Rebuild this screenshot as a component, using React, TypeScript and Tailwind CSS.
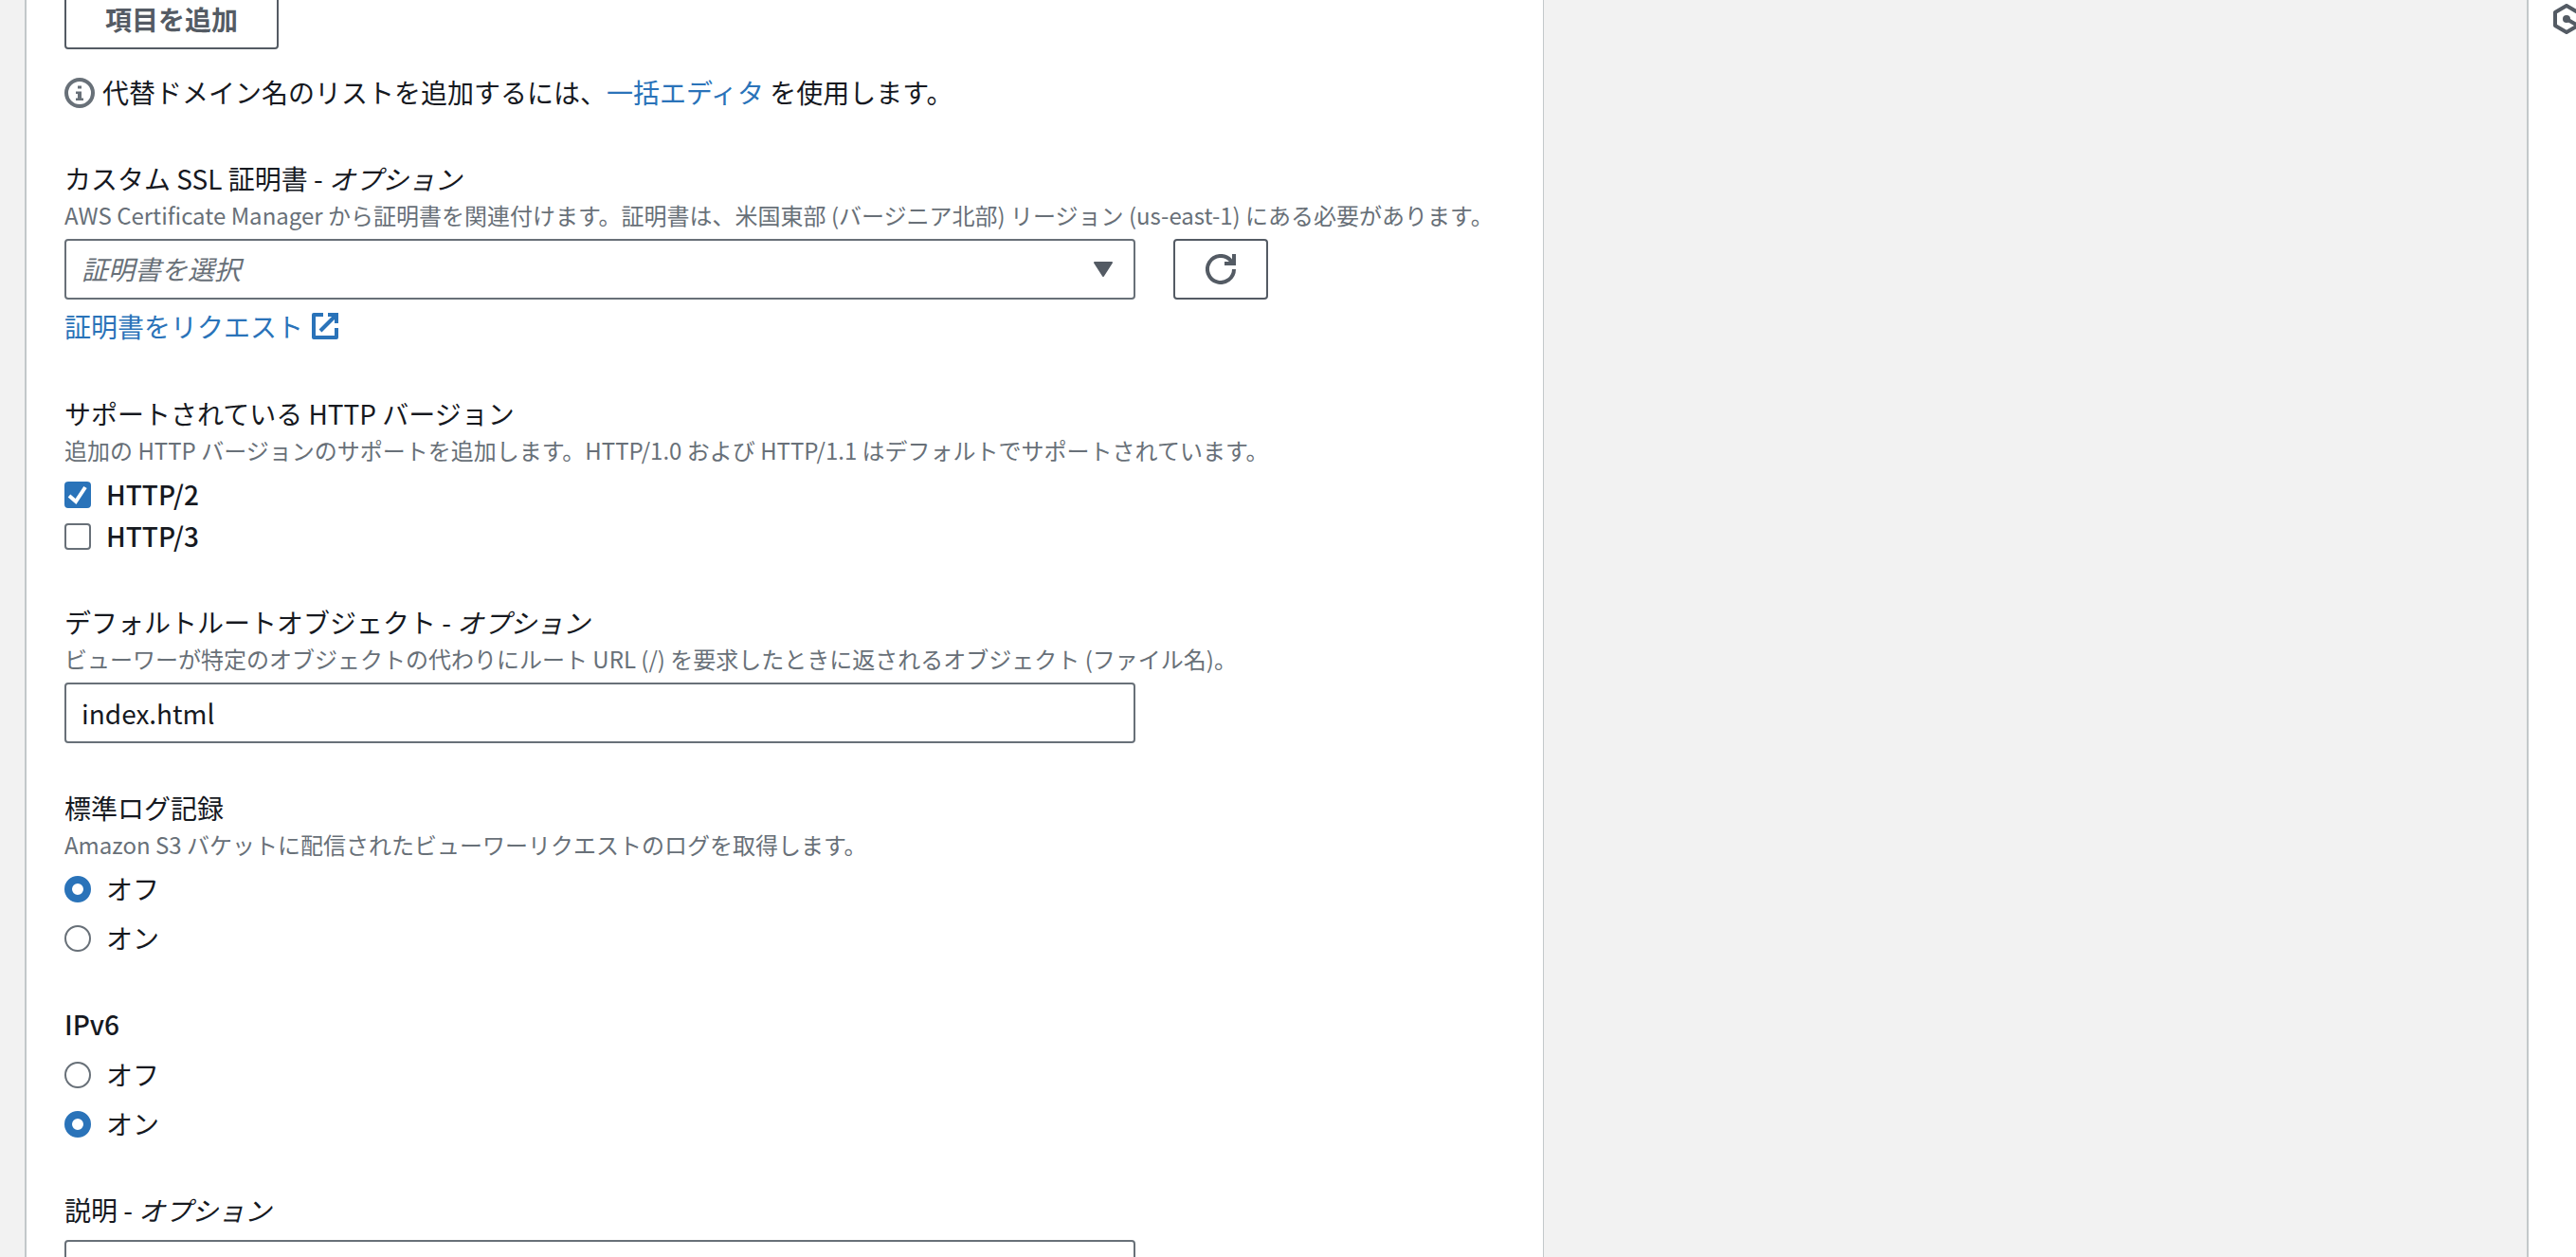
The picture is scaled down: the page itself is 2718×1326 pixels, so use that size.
import React, { useState } from 'react';

// --- ICONS ---
const InfoIcon = () => (
    <svg className="w-8 h-8 shrink-0" viewBox="0 0 16 16" aria-hidden="true">
        <circle cx="8" cy="8" r="7" fill="none" stroke="#687078" strokeWidth="2" />
        <path d="M7 4.300h2v1.500H7zM6 7.200h3v3.500h1V12H6v-1.300h1V8.500H6z" fill="#687078" />
    </svg>
);

const ExternalIcon = () => (
    <svg className="w-7 h-7 shrink-0" viewBox="0 0 14 14" fill="none" stroke="currentColor" strokeWidth="2" aria-hidden="true">
        <path d="M6 1H1v12h12V8" strokeLinejoin="round" />
        <path d="M8.500 1H13v4.500" />
        <path d="M13 1L4.500 9.500" />
    </svg>
);

const RefreshIcon = () => (
    <svg className="w-8 h-8" viewBox="0 0 16 16" fill="none" stroke="currentColor" strokeWidth="2" aria-hidden="true">
        <path d="M15 8a7 7 0 1 1-1.800-4.700L15 5" />
        <path d="M10 5h5V0" />
    </svg>
);

const HexagonIcon = () => (
    <svg className="w-8 h-8" viewBox="0 0 16 16" aria-hidden="true">
        <path d="M14 5V4.500L8 1L2 4.500v7L8 15l6-3.500L8 8" fill="none" stroke="#545b64" strokeWidth="2" strokeLinejoin="round" />
        <circle cx="8" cy="8" r="2" fill="#545b64" />
    </svg>
);

// --- FORM PARTS ---
interface FieldTextProps {
    label: string;
    optional?: boolean;
    hint?: string;
}

const FieldText: React.FC<FieldTextProps> = ({ label, optional, hint }) => (
    <>
        <span className={`block text-[28px] leading-[44px] ${hint ? '' : 'pb-0.5'}`}>
            {label}
            {optional && <> - <i>オプション</i></>}
        </span>
        {hint && <span className="block text-2xl leading-[34px] text-[#687078] whitespace-nowrap">{hint}</span>}
    </>
);

interface CheckProps {
    label: string;
    checked: boolean;
    onChange: () => void;
}

const Checkbox: React.FC<CheckProps> = ({ label, checked, onChange }) => (
    <label className="flex items-center gap-4 h-11 text-[28px] font-medium">
        <span className="relative flex w-7 h-7">
            <input
                type="checkbox"
                checked={checked}
                onChange={onChange}
                className="appearance-none w-7 h-7 rounded-sm border-2 border-[#687078] bg-white checked:border-[#2a73b9] checked:bg-[#2a73b9]"
            />
            {checked && (
                <svg className="absolute inset-0 w-7 h-7 pointer-events-none" viewBox="0 0 14 14" fill="none" stroke="#fff" strokeWidth="2">
                    <path d="M2.500 7.500L6 10.500L11 3" />
                </svg>
            )}
        </span>
        <span className="pb-0.5">{label}</span>
    </label>
);

const Radio: React.FC<CheckProps & { name: string }> = ({ label, name, checked, onChange }) => (
    <label className="flex items-center gap-4 h-11 text-[28px]">
        <input
            type="radio"
            name={name}
            checked={checked}
            onChange={onChange}
            className="appearance-none w-7 h-7 rounded-full border-2 border-[#687078] bg-white checked:border-8 checked:border-[#2a73b9]"
        />
        <span className="pb-0.5">{label}</span>
    </label>
);

interface OnOffProps {
    name: string;
    label: string;
    hint?: string;
    initial: boolean;
}

const OnOffField: React.FC<OnOffProps> = ({ name, label, hint, initial }) => {
    const [on, setOn] = useState(initial);

    return (
        <fieldset>
            <legend className={hint ? '' : 'font-medium'}><FieldText label={label} hint={hint} /></legend>
            <div className="flex flex-col gap-2 mt-2">
                <Radio name={name} label="オフ" checked={!on} onChange={() => setOn(false)} />
                <Radio name={name} label="オン" checked={on} onChange={() => setOn(true)} />
            </div>
        </fieldset>
    );
};

const inputClass = 'col-span-3 w-full h-16 px-4 rounded-sm border-2 border-[#687078] bg-white text-[28px] outline-none';

const App: React.FC = () => {
    const [http2, setHttp2] = useState(true);
    const [http3, setHttp3] = useState(false);

    return (
        <div className="flex h-screen overflow-hidden bg-[#f2f2f2] text-[#16191f] font-['Noto_Sans_CJK_JP',sans-serif]" lang="ja">
            <main className="grid grid-cols-[1603fr_1037fr] flex-1 pl-[26px]">
                <form className="flex flex-col gap-[46px] px-10 bg-white border-l-2 border-r border-[#c3c8ca]">
                    <div className="flex flex-col items-start gap-6">
                        <button
                            type="button"
                            className="-mt-3 h-16 px-[41px] rounded-sm border-2 border-[#545b64] text-[28px] leading-none font-bold text-[#545b64]"
                        >
                            項目を追加
                        </button>
                        <p className="flex items-center gap-2 h-11 text-[28px]">
                            <InfoIcon />
                            <span className="pb-0.5">
                                代替ドメイン名のリストを追加するには、<a href="#bulk" className="text-[#2a73b9]">一括エディタ</a> を使用します。
                            </span>
                        </p>
                    </div>

                    <div>
                        <label htmlFor="certificate">
                            <FieldText
                                label="カスタム SSL 証明書"
                                optional
                                hint="AWS Certificate Manager から証明書を関連付けます。証明書は、米国東部 (バージニア北部) リージョン (us-east-1) にある必要があります。"
                            />
                        </label>
                        <div className="grid grid-cols-4 gap-10 mt-2">
                            <div className="relative col-span-3">
                                <select
                                    id="certificate"
                                    className="appearance-none w-full h-16 px-4 pb-0.5 rounded-sm border-2 border-[#687078] bg-white text-[28px] italic text-[#687078] outline-none"
                                >
                                    <option>証明書を選択</option>
                                </select>
                                <svg className="absolute right-6 top-6 w-5 h-4 pointer-events-none" viewBox="0 0 20 16" aria-hidden="true">
                                    <path d="M1 1h18l-9 14z" fill="#545b64" stroke="#545b64" strokeWidth="2" strokeLinejoin="round" />
                                </svg>
                            </div>
                            <button
                                type="button"
                                aria-label="更新"
                                className="flex items-center justify-center w-[100px] h-16 rounded-sm border-2 border-[#545b64] text-[#545b64]"
                            >
                                <RefreshIcon />
                            </button>
                        </div>
                        <a href="#request" className="flex items-center gap-[9px] w-fit mt-1.5 pb-0.5 text-[28px] leading-[44px] text-[#2a73b9]">
                            証明書をリクエスト
                            <ExternalIcon />
                        </a>
                    </div>

                    <fieldset>
                        <legend>
                            <FieldText
                                label="サポートされている HTTP バージョン"
                                hint="追加の HTTP バージョンのサポートを追加します。HTTP/1.0 および HTTP/1.1 はデフォルトでサポートされています。"
                            />
                        </legend>
                        <div className="mt-2">
                            <Checkbox label="HTTP/2" checked={http2} onChange={() => setHttp2(!http2)} />
                            <Checkbox label="HTTP/3" checked={http3} onChange={() => setHttp3(!http3)} />
                        </div>
                    </fieldset>

                    <div>
                        <label htmlFor="root-object">
                            <FieldText
                                label="デフォルトルートオブジェクト"
                                optional
                                hint="ビューワーが特定のオブジェクトの代わりにルート URL (/) を要求したときに返されるオブジェクト (ファイル名)。"
                            />
                        </label>
                        <div className="grid grid-cols-4 gap-10 mt-2">
                            <input id="root-object" type="text" defaultValue="index.html" className={inputClass} />
                        </div>
                    </div>

                    <OnOffField
                        name="logging"
                        label="標準ログ記録"
                        hint="Amazon S3 バケットに配信されたビューワーリクエストのログを取得します。"
                        initial={false}
                    />

                    <OnOffField name="ipv6" label="IPv6" initial={true} />

                    <div>
                        <label htmlFor="description">
                            <FieldText label="説明" optional />
                        </label>
                        <div className="grid grid-cols-4 gap-10 mt-2">
                            <input id="description" type="text" className={inputClass} />
                        </div>
                    </div>
                </form>
            </main>

            {/* collapsed side panel, its button runs past the window edge */}
            <aside className="w-[52px] shrink-0 overflow-hidden bg-white border-l-2 border-[#c3c8ca]">
                <button type="button" aria-label="パネルを開く" className="flex ml-6 mt-1">
                    <HexagonIcon />
                </button>
            </aside>
        </div>
    );
};

export default App;
